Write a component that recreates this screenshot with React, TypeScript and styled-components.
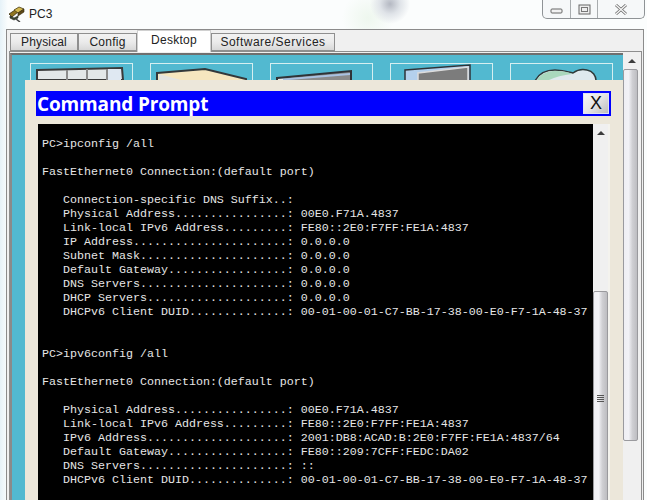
import React from "react";
import styled, { createGlobalStyle } from "styled-components";

const Global = createGlobalStyle`
	html, body {
		margin: 0;
		padding: 0;
		overflow: hidden;
		background: #f4f8fa;
	}
`;

const Frame = styled.div`
	width: 647px;
	height: 500px;
	position: relative;
	overflow: hidden;
	display: flex;
	flex-direction: column;
	font-family: "Liberation Sans", sans-serif;
	background:
		radial-gradient(circle at 390px 4px, #b4b8c2 0, #dfe3e8 10px, transparent 20px),
		radial-gradient(circle at 368px 18px, #eef7ee 0, transparent 26px),
		linear-gradient(90deg, #e6f2f8 0, #fbfdfd 8px, #fbfdfd 100%);
`;
const TitleBar = styled.div`
	height: 28px;
	flex: none;
	display: flex;
	align-items: center;
	padding: 0 2px 1px 8px;
	gap: 4px;
`;
const TitleText = styled.div`
	font-size: 12px;
	color: #222;
	flex: 1;
`;
const Controls = styled.div`
	display: flex;
	align-self: flex-start;
	height: 18px;
	border: 1px solid #8f9396;
	border-top: none;
	border-radius: 0 0 5px 5px;
	background: #f6f8f9;
`;
const ControlBtn = styled.div<{ $w: number; $line?: boolean }>`
	width: ${(p) => p.$w}px;
	display: flex;
	align-items: flex-start;
	justify-content: center;
	border-right: ${(p) => (p.$line ? "1px solid #a8acae" : "none")};
`;
const Shell = styled.div`
	flex: 1;
	min-height: 0;
	margin: 0 3px 0 6px;
	border: 1px solid #8b8b8b;
	border-bottom: none;
	background: #f0f0f0;
	display: flex;
	flex-direction: column;
`;
const TabRow = styled.div`
	height: 21px;
	flex: none;
	display: flex;
	align-items: flex-end;
	padding-left: 3px;
	position: relative;
	z-index: 1;
`;
const Tab = styled.div<{ $w: number; $active?: boolean; $ls?: number }>`
	width: ${(p) => p.$w}px;
	height: ${(p) => (p.$active ? 22 : 18)}px;
	margin-bottom: ${(p) => (p.$active ? -1 : 0)}px;
	padding-bottom: ${(p) => (p.$active ? 3 : 0)}px;
	box-sizing: border-box;
	display: flex;
	align-items: center;
	justify-content: center;
	font-size: 12px;
	letter-spacing: ${(p) => p.$ls ?? 0.25}px;
	color: #222;
	border: 1px solid #8f8f8f;
	border-bottom: ${(p) => (p.$active ? "none" : "1px solid #8f8f8f")};
	border-left-color: ${(p) => (p.$active ? "#d0d0d0" : "#8f8f8f")};
	border-right-color: ${(p) => (p.$active ? "#d0d0d0" : "#8f8f8f")};
	border-top-color: ${(p) => (p.$active ? "#d0d0d0" : "#8f8f8f")};
	background: ${(p) =>
		p.$active ? "#fff" : "linear-gradient(180deg, #f2f2f2 0%, #ebebeb 50%, #d8d8d8 100%)"};
`;
const Panel = styled.div`
	flex: 1;
	min-height: 0;
	margin: 0 1px 0 2px;
	padding-top: 1px;
	display: flex;
	border: 1px solid #8e8e8e;
	border-bottom: none;
	background: #f0f0f0;
`;
const Desk = styled.div`
	flex: 1;
	min-width: 0;
	border-left: 2px solid #8a8a8a;
	border-top: 2px solid #6f6f6f;
	background: #52b9d0;
	position: relative;
	overflow: hidden;
`;
const CardRow = styled.div`
	display: flex;
	gap: 17px;
	padding: 8px 0 0 18px;
`;
const Card = styled.div`
	width: 103px;
	height: 100px;
	box-sizing: border-box;
	border: 1px solid #d6eff0;
`;
const CardArt = styled.svg`
	display: block;
	width: 101px;
	height: 16px;
`;
const Dialog = styled.div`
	position: absolute;
	left: 13px;
	right: 0;
	top: 25px;
	height: 430px;
	background: #ece7da;
	box-sizing: border-box;
	padding: 11px 0 0 11px;
	display: flex;
	flex-direction: column;
`;
const DialogBar = styled.div`
	height: 25px;
	flex: none;
	background: #0000ff;
	display: flex;
	align-items: center;
	justify-content: space-between;
	padding: 0 2px 0 1px;
	box-sizing: border-box;
	width: 575px;
`;
const DialogTitle = styled.div`
	font-family: "Open Sans", sans-serif;
	font-weight: 700;
	font-size: 19px;
	letter-spacing: -0.15px;
	color: #fff;
`;
const CloseBtn = styled.div`
	width: 26px;
	height: 21px;
	box-sizing: border-box;
	display: flex;
	align-items: center;
	justify-content: center;
	font-size: 18px;
	color: #111;
	background: linear-gradient(135deg, #f6f6f6, #e4e4e4 50%, #bdbdbd);
	border: 1px solid #dfe3f2;
`;
const Body = styled.div`
	flex: 1;
	min-height: 0;
	margin: 8px 0 0 2px;
	display: flex;
	width: 572px;
	padding-right: 2px;
	box-sizing: border-box;
	background: #f4f3ee;
`;
const Terminal = styled.pre`
	flex: 1;
	min-width: 0;
	margin: 0;
	background: #000;
	color: #e6e6e6;
	font-family: "Liberation Mono", monospace;
	font-size: 11.67px;
	line-height: 14px;
	padding: 13px 0 0 4px;
	overflow: hidden;
`;
const Bar = styled.div<{ $w: number }>`
	width: ${(p) => p.$w}px;
	flex: none;
	background: #f0f0f0;
	display: flex;
	flex-direction: column;
	align-items: flex-start;
`;
const Arrow = styled.div<{ $h: number }>`
	height: ${(p) => p.$h}px;
	flex: none;
	width: 100%;
	display: flex;
	align-items: center;
	justify-content: center;
	&::before {
		content: "";
		border-left: 4px solid transparent;
		border-right: 4px solid transparent;
		border-bottom: 4px solid #3c3c3c;
	}
`;
const Thumb = styled.div<{ $mt: number; $h: number }>`
	margin-top: ${(p) => p.$mt}px;
	height: ${(p) => p.$h}px;
	width: 15px;
	box-sizing: border-box;
	flex: none;
	border: 1px solid #9a9a9e;
	border-radius: 2px;
	background: linear-gradient(90deg, #efeff3 0%, #f2f2f6 35%, #cfcfd3 65%, #bdbdc1 100%);
	display: flex;
	align-items: center;
	justify-content: center;
`;
const Grip = styled.div`
	width: 7px;
	height: 8px;
	background: repeating-linear-gradient(180deg, #555 0 1px, transparent 1px 2px);
`;

const output = `PC>ipconfig /all

FastEthernet0 Connection:(default port)

   Connection-specific DNS Suffix..:
   Physical Address................: 00E0.F71A.4837
   Link-local IPv6 Address.........: FE80::2E0:F7FF:FE1A:4837
   IP Address......................: 0.0.0.0
   Subnet Mask.....................: 0.0.0.0
   Default Gateway.................: 0.0.0.0
   DNS Servers.....................: 0.0.0.0
   DHCP Servers....................: 0.0.0.0
   DHCPv6 Client DUID..............: 00-01-00-01-C7-BB-17-38-00-E0-F7-1A-48-37


PC>ipv6config /all

FastEthernet0 Connection:(default port)

   Physical Address................: 00E0.F71A.4837
   Link-local IPv6 Address.........: FE80::2E0:F7FF:FE1A:4837
   IPv6 Address....................: 2001:DB8:ACAD:B:2E0:F7FF:FE1A:4837/64
   Default Gateway.................: FE80::209:7CFF:FEDC:DA02
   DNS Servers.....................: ::
   DHCPv6 Client DUID..............: 00-01-00-01-C7-BB-17-38-00-E0-F7-1A-48-37
`;

const PcIcon = () => (
	<svg width="17" height="16" viewBox="0 0 17 16">
		<path d="M1 8l6-4 3 2-6 5z" fill="#8f7420" stroke="#3a2e10" strokeWidth="0.8" />
		<path d="M6 4l5-3 5 2-6 4z" fill="#d2b84f" stroke="#4a3c14" strokeWidth="0.8" />
		<path d="M10 7l6-4v3l-6 4z" fill="#5f4a18" stroke="#2e2610" strokeWidth="0.6" />
		<path d="M2 10l4 2 4-2v2l-4 2-4-2z" fill="#3f4a34" stroke="#22241a" strokeWidth="0.6" />
		<path d="M8 13l4 3" stroke="#444" strokeWidth="1.500" />
	</svg>
);

const arts = [
	<CardArt key="a" viewBox="0 0 101 16">
		<path d="M6 6L91 4l1 12H6z" fill="#e3e7e8" stroke="#3a3a3a" strokeWidth="2" />
		<path d="M36 6v10M56 5v11M76 5v11" stroke="#8c8c8c" strokeWidth="2" />
		<path d="M77 5h13v11H77z" fill="#dfe8f2" />
	</CardArt>,
	<CardArt key="b" viewBox="0 0 101 16">
		<path d="M6 9L54 5l41 10v2H6z" fill="#f6e6bf" stroke="#33383a" strokeWidth="2" />
		<path d="M8 10l22 6H8z" fill="#e4e4e0" />
	</CardArt>,
	<CardArt key="c" viewBox="0 0 101 16">
		<path d="M6 14L80 7v10H6z" fill="#8b8b8b" stroke="#2f3338" strokeWidth="2" />
		<path d="M7 15L79 9v2L18 16H7z" fill="#a9c2e2" />
		<path d="M7 15h5v2H7z" fill="#f0f0e8" />
	</CardArt>,
	<CardArt key="d" viewBox="0 0 101 16">
		<path d="M14 6L79 1v16H14z" fill="#b4d0ec" stroke="#2f3338" strokeWidth="1.500" />
		<path d="M27 9l50-6v14H27z" fill="#7c7c7c" stroke="#dcdcdc" strokeWidth="1.500" />
	</CardArt>,
	<CardArt key="e" viewBox="0 0 101 16">
		<path d="M24 17C28 9 36 6 44 6C52 6 58 8 62 9C66 6 72 5 76 6C82 7 85 12 85 17z" fill="#dfe9ee" stroke="#2f3a3a" strokeWidth="1.500" />
		<path d="M26 16C30 9 38 7 44 7C52 7 58 8 61 10C52 11 44 13 38 16z" fill="#a9d8bd" />
	</CardArt>,
];

export default function App() {
	return (
		<Frame>
			<Global />
			<TitleBar>
				<PcIcon />
				<TitleText>PC3</TitleText>
				<Controls>
					<ControlBtn $w={27} $line>
						<svg width="13" height="18" viewBox="0 0 13 18">
							<rect x="1" y="9" width="11" height="4" rx="1" fill="#f2f2f2" stroke="#666" />
						</svg>
					</ControlBtn>
					<ControlBtn $w={26} $line>
						<svg width="13" height="18" viewBox="0 0 13 18">
							<rect x="1" y="5" width="11" height="9" fill="#eee" stroke="#666" />
							<rect x="3.500" y="7.500" width="6" height="4" fill="none" stroke="#777" />
						</svg>
					</ControlBtn>
					<ControlBtn $w={46}>
						<svg width="14" height="18" viewBox="0 0 14 18">
							<path d="M2 5l10 9M12 5L2 14" stroke="#666" strokeWidth="3" />
							<path d="M2 5l10 9M12 5L2 14" stroke="#f4f4f4" strokeWidth="1.500" />
						</svg>
					</ControlBtn>
				</Controls>
			</TitleBar>
			<Shell>
				<TabRow>
					<Tab $w={68} $ls={0.15}>Physical</Tab>
					<Tab $w={59}>Config</Tab>
					<Tab $w={74} $active>Desktop</Tab>
					<Tab $w={124} $ls={0.5}>Software/Services</Tab>
				</TabRow>
				<Panel>
					<Desk>
						<CardRow>
							{arts.map((art) => (
								<Card key={art.key}>{art}</Card>
							))}
						</CardRow>
						<Dialog>
							<DialogBar>
								<DialogTitle>Command Prompt</DialogTitle>
								<CloseBtn>X</CloseBtn>
							</DialogBar>
							<Body>
								<Terminal>{output}</Terminal>
								<Bar $w={15}>
									<Arrow $h={17} />
									<Thumb $mt={150} $h={216}>
										<Grip />
									</Thumb>
								</Bar>
							</Body>
						</Dialog>
					</Desk>
					<Bar $w={18}>
						<Arrow $h={16} />
						<Thumb $mt={0} $h={372} />
					</Bar>
				</Panel>
			</Shell>
		</Frame>
	);
}
